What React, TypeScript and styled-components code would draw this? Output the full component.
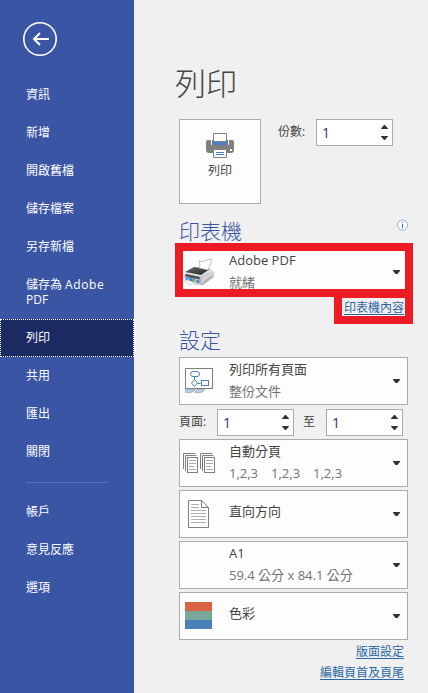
import React from "react";
import styled, { createGlobalStyle } from "styled-components";

const Global = createGlobalStyle`
  * { box-sizing: border-box; }
  body { margin: 0; background: #f0f0f0; }
  body, button, input { font-family: "Open Sans", "Noto Sans CJK TC", sans-serif; font-size: 12px; }
`;

const Page = styled.div`
  position: relative;
  display: flex;
  width: 428px;
  height: 693px;
  overflow: hidden;
  background: #f0f0f0;
  color: #444;
`;

const Sidebar = styled.nav`
  width: 134px;
  flex: none;
  background: #3955a3;
  color: #fff;
`;

const BackButton = styled.button`
  display: block;
  margin: 22px 0 19px 23px;
  padding: 0;
  width: 35px;
  height: 35px;
  border: 0;
  background: none;
  svg { display: block; }
`;

const NavItem = styled.div<{ $active?: boolean; $tall?: boolean }>`
  display: flex;
  align-items: center;
  height: ${(p) => (p.$tall ? 53 : 38)}px;
  padding: 0 24px 1px 25px;
  border: 1px dotted ${(p) => (p.$active ? "#fff" : "transparent")};
  background: ${(p) => (p.$active ? "#1b2a63" : "transparent")};
  line-height: 15px;
`;

const WrappedLabel = styled.div`
  display: flex;
  flex-wrap: wrap;
  column-gap: 3px;
`;

const Latin = styled.span`
  letter-spacing: 0.6px;
`;

const NavDivider = styled.div`
  height: 1px;
  width: 82px;
  margin: 11px 0 10px 26px;
  background: #5670b9;
`;

const Main = styled.main`
  flex: 1;
  display: flex;
  flex-direction: column;
  align-items: flex-start;
  padding: 59px 0 0 45px;
`;

const Title = styled.h1`
  margin: 0 0 12px -4px;
  height: 48px;
  line-height: 48px;
  font-size: 31px;
  font-weight: 300;
`;

const PrintRow = styled.div`
  display: flex;
  align-items: flex-start;
  height: 85px;
`;

const PrintButton = styled.button`
  width: 82px;
  height: 85px;
  padding: 13px 0 0;
  border: 1px solid #ababab;
  background: #fdfdfd;
  color: #444;
  display: flex;
  flex-direction: column;
  align-items: center;
  gap: 4px;
  line-height: 18px;
`;

const Label = styled.span<{ $width: number; $indent?: number }>`
  width: ${(p) => p.$width}px;
  margin-left: ${(p) => p.$indent ?? 0}px;
  line-height: 26px;
  flex: none;
`;

const SpinBox = styled.div`
  display: flex;
  justify-content: space-between;
  align-items: center;
  flex: none;
  width: 77px;
  height: 27px;
  padding: 0 4px 0 5px;
  border: 1px solid #ababab;
  background: #fff;
  color: #35356f;
  font-size: 14px;
  span { margin-top: -1px; }
`;

const SectionHeading = styled.h2<{ $space: number }>`
  display: flex;
  justify-content: space-between;
  align-items: center;
  width: 229px;
  height: 30px;
  margin: ${(p) => p.$space}px 0 0;
  line-height: 30px;
  font-size: 21px;
  font-weight: 300;
  color: #3955a3;
  svg { margin: -12px 0 0; }
`;

const Dropdown = styled.div<{ $space?: number }>`
  display: flex;
  width: 229px;
  height: 48px;
  margin-top: ${(p) => p.$space ?? 3}px;
  padding-right: 7px;
  border: 1px solid #ababab;
  background: #fdfdfd;
  flex: none;
  > svg:last-child { align-self: center; flex: none; }
`;

const IconCell = styled.div`
  width: 49px;
  flex: none;
  svg { display: block; }
`;

const OptionText = styled.div<{ $single?: boolean }>`
  flex: 1;
  padding-top: ${(p) => (p.$single ? 9 : 0)}px;
  line-height: 22px;
  font-size: 13px;
  white-space: nowrap;
`;

const Detail = styled.div`
  display: flex;
  gap: 13px;
  color: #737373;
`;

const PageRange = styled.div`
  display: flex;
  height: 27px;
  margin-top: 4px;
`;

const Link = styled.a<{ $space: number }>`
  align-self: flex-end;
  margin: ${(p) => p.$space}px 24px 0 0;
  height: 18px;
  line-height: 18px;
  color: #2b66a5;
  text-decoration: underline;
  text-underline-offset: 2px;
`;

const Highlight = styled.div<{ $x: number; $y: number; $w: number; $h: number }>`
  position: absolute;
  left: ${(p) => p.$x}px;
  top: ${(p) => p.$y}px;
  width: ${(p) => p.$w}px;
  height: ${(p) => p.$h}px;
  border: 8px solid #ed1c24;
  pointer-events: none;
`;

const Caret = () => (
  <svg width="7" height="4" viewBox="0 0 7 4"><path d="M0 0h7v.8L4.5 4h-2L0 .8z" fill="#333" /></svg>
);

const Spinner = ({ value }: { value: number }) => (
  <SpinBox>
    <span>{value}</span>
    <svg width="7" height="15" viewBox="0 0 7 15" fill="#333">
      <path d="M0 4h7v-.6L4 0H3L0 3.4zM0 11h7v.6L4 15H3L0 11.6z" />
    </svg>
  </SpinBox>
);

const PrinterGlyph = () => (
  <svg width="28" height="25" viewBox="0 0 28 25">
    <path d="M2 7h24q2 0 2 2v8q0 3-3 3H3q-3 0-3-3V9q0-2 2-2z" fill="#7f7f7f" />
    <path d="M5 6h18v6H5z" fill="#fdfdfd" />
    <path d="M6 7h16v5H6z" fill="#4a80bd" />
    <path d="M7.5.5h13v8h-13zM7.5 16.5h13v8h-13z" fill="#fff" stroke="#7f7f7f" />
    <path d="M10 19.5h8M10 21.5h8" stroke="#4a80bd" />
    <rect x="24" y="16" width="2" height="2" fill="#fff" />
  </svg>
);

const DevicePrinter = () => (
  <svg width="49" height="46" viewBox="0 0 49 46">
    <defs>
      <linearGradient id="lid" x1="0" y1="0" x2="1" y2="1">
        <stop stopColor="#6f7274" /><stop offset=".5" stopColor="#45484a" /><stop offset="1" stopColor="#1d1f21" />
      </linearGradient>
      <linearGradient id="case" x1="0" y1="0" x2="0" y2="1">
        <stop stopColor="#e4e6e7" /><stop offset="1" stopColor="#a0a4a7" />
      </linearGradient>
    </defs>
    <path d="M5 23l8-4 18 1 3 3v5l-11 8-7-1-12-7z" fill="url(#case)" />
    <path d="M5 23l9-5 16 2-9 6z" fill="url(#lid)" />
    <path d="M19 12q2 1 5 0l7-2 1 1-4 10-9-2q2-3 0-7z" fill="#fdfdfd" stroke="#a3a6a9" strokeWidth=".7" />
    <path d="M5 24l16 3 9-6" fill="none" stroke="#f2f3f4" strokeWidth=".8" />
    <path d="M6 25l14 3-1 3-14-4z" fill="#4b4e50" />
    <path d="M22 29l11-6v4l-11 8z" fill="#d2d5d7" />
    <path d="M24 33l8-6" stroke="#83878a" strokeWidth=".7" />
    <path d="M4 28l14 2 4 4-4 2-12-3z" fill="#c5ccd1" />
    <path d="M6 28l9 2-1 3-8-2z" fill="#347abd" />
    <path d="M7 29l3 .5-.5 1.500-3-.5z" fill="#73c6f0" />
    <path d="M12 30l2 .5-.5 2-2-.5z" fill="#72b75f" />
    <path d="M16 31l3 .5 1 2-3 .5z" fill="#497eae" />
    <path d="M4 32l4-1 7 3-5 2z" fill="#f5f6f7" stroke="#bfc4c7" strokeWidth=".5" />
  </svg>
);

const SlidesIcon = () => (
  <svg width="49" height="46" viewBox="0 0 49 46">
    <path d="M5.500 31h10q-2 3.500-5 3.500h-5zM15 34.500q1-3.500 4-3.500h6q-2 3.500-5 3.500z" fill="#b9cbe2" stroke="#8799af" strokeWidth=".6" />
    <rect x="5.500" y="10.500" width="27" height="20" fill="#fff" stroke="#7f7f7f" />
    <g fill="none" stroke="#4a80bd">
      <rect x="10.500" y="13.500" width="9" height="5" rx="2.500" />
      <path d="M14.500 18.500v3M11.500 25l3-3.500 3 3.500-3 3.500zM17.500 25.500h3" />
      <rect x="21.500" y="22.500" width="7" height="5" />
    </g>
  </svg>
);

const PageStack = ({ x }: { x: number }) => (
  <g transform={`translate(${x} 0)`} fill="none" stroke="#7f7f7f">
    <path d="M.5 29v-15.500h12" />
    <path d="M2.500 31v-15.500h11" />
    <rect x="4.500" y="17.500" width="10" height="15" fill="#fff" />
    <path d="M6 20.500h7M6 23.500h7M6 26.500h5M6 29.500h7" stroke="#a6a6a6" />
  </g>
);

const CollateIcon = () => (
  <svg width="49" height="46" viewBox="0 0 49 46"><PageStack x={3} /><PageStack x={20} /></svg>
);

const PortraitIcon = () => (
  <svg width="49" height="46" viewBox="0 0 49 46">
    <path d="M8.500 9.500h13l7 7v20h-20zM21.500 9.500v7h7" fill="#fff" stroke="#7f7f7f" />
    <path d="M11 13.500h8M11 16.500h8M11 19.500h15M11 22.500h15M11 25.500h15M11 28.500h15M11 31.500h15" stroke="#b0b0b0" />
  </svg>
);

const ColorIcon = () => (
  <svg width="49" height="46" viewBox="0 0 49 46">
    <rect x="5" y="9" width="27" height="9" fill="#d86344" />
    <rect x="5" y="18" width="27" height="9" fill="#77a898" />
    <rect x="5" y="27" width="27" height="9" fill="#4b80ba" />
  </svg>
);

interface OptionProps {
  icon?: React.ReactNode;
  title: string;
  details?: string[];
  space?: number;
}

const Option = ({ icon, title, details, space }: OptionProps) => (
  <Dropdown $space={space}>
    <IconCell>{icon}</IconCell>
    <OptionText $single={!details}>
      {title}
      {details && <Detail>{details.map((d, i) => <span key={i}>{d}</span>)}</Detail>}
    </OptionText>
    <Caret />
  </Dropdown>
);

const beforeAdobe = ["資訊", "新增", "開啟舊檔", "儲存檔案", "另存新檔"];
const afterAdobe = ["列印", "共用", "匯出", "關閉"];
const accountItems = ["帳戶", "意見反應", "選項"];

export default function App() {
  return (
    <Page>
      <Global />
      <Sidebar>
        <BackButton aria-label="返回">
          <svg width="35" height="35" viewBox="0 0 35 35" fill="none" stroke="#fff">
            <circle cx="17" cy="17" r="16.2" strokeWidth="1.6" />
            <path d="M26 17H10.5M17 11l-6 6 6 6" strokeWidth="2" />
          </svg>
        </BackButton>
        {beforeAdobe.map((item) => <NavItem key={item}>{item}</NavItem>)}
        <NavItem $tall>
          <WrappedLabel>
            <span>儲存為</span>
            <Latin>Adobe</Latin>
            <span>PDF</span>
          </WrappedLabel>
        </NavItem>
        {afterAdobe.map((item) => <NavItem key={item} $active={item === "列印"}>{item}</NavItem>)}
        <NavDivider />
        {accountItems.map((item) => <NavItem key={item}>{item}</NavItem>)}
      </Sidebar>
      <Main>
        <Title>列印</Title>
        <PrintRow>
          <PrintButton><PrinterGlyph />列印</PrintButton>
          <Label $width={38} $indent={17}>份數:</Label>
          <Spinner value={1} />
        </PrintRow>
        <SectionHeading $space={12}>
          印表機
          <svg width="12" height="12" viewBox="0 0 12 12">
            <circle cx="6.500" cy="6" r="5" fill="#fff" stroke="#8fb0de" />
            <path d="M6.500 5v4M6.500 3v1" stroke="#3c6eb4" />
          </svg>
        </SectionHeading>
        <Option icon={<DevicePrinter />} title="Adobe PDF" details={["就緒"]} space={2} />
        <Link $space={3}>印表機內容</Link>
        <SectionHeading $space={8}>設定</SectionHeading>
        <Option icon={<SlidesIcon />} title="列印所有頁面" details={["整份文件"]} space={2} />
        <PageRange>
          <Label $width={38}>頁面:</Label>
          <Spinner value={1} />
          <Label $width={23} $indent={9}>至</Label>
          <Spinner value={1} />
        </PageRange>
        <Option icon={<CollateIcon />} title="自動分頁" details={["1,2,3", "1,2,3", "1,2,3"]} />
        <Option icon={<PortraitIcon />} title="直向方向" />
        <Option title="A1" details={["59.4 公分 x 84.1 公分"]} />
        <Option icon={<ColorIcon />} title="色彩" />
        <Link $space={3}>版面設定</Link>
        <Link $space={3}>編輯頁首及頁尾</Link>
      </Main>
      <Highlight $x={334} $y={290} $w={79} $h={34} />
      <Highlight $x={175} $y={243} $w={238} $h={54} />
    </Page>
  );
}
